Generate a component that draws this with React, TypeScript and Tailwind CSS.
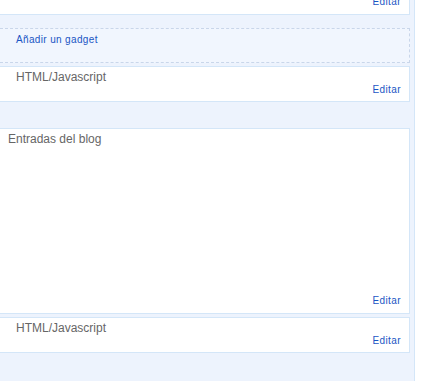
import React from "react";

function Widget({
  title,
  indent = "pl-4",
  height = "h-[36px]",
}: {
  title?: string;
  indent?: string;
  height?: string;
}) {
  return (
    <div
      className={`relative ${height} bg-white border border-l-0 border-[#d4e6f8] flex flex-col justify-between pt-[3px] pb-[7px] pr-[8px]`}
    >
      <div className={`${indent} text-[12px] leading-[14px] text-[#666666]`}>{title}</div>
      <div className="self-end text-[10px] leading-[11px] tracking-[0.4px] text-[#1a55c4]">
        Editar
      </div>
    </div>
  );
}

export default function App() {
  return (
    <div
      className="w-[441px] h-[381px] overflow-hidden bg-white flex"
      style={{ fontFamily: '"Liberation Sans", Arial, sans-serif' }}
    >
      <div className="w-[415px] h-full bg-[#edf3fd] border-r border-[#d4e6f8] pr-[4px]">
        <div className="-mt-[21px]">
          <Widget title="" />
        </div>

        <div className="mt-[13px] h-[35px] bg-[#f1f6fe] border border-l-0 border-dashed border-[#c9d6ea] pl-4 pt-[5px] text-[10px] leading-[12px] tracking-[0.35px] text-[#1a55c4]">
          Añadir un gadget
        </div>

        <div className="mt-[3px]">
          <Widget title="HTML/Javascript" />
        </div>

        <div className="mt-[26px]">
          <Widget title="Entradas del blog" indent="pl-2" height="h-[186px]" />
        </div>

        <div className="mt-[3px]">
          <Widget title="HTML/Javascript" />
        </div>
      </div>
    </div>
  );
}
